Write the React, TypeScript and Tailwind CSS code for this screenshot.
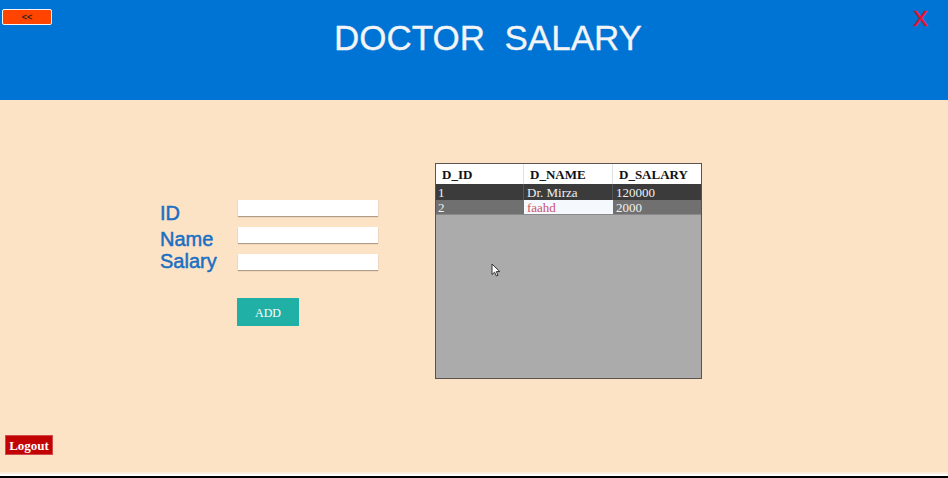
import React from "react";

const rows = [
  { id: "1", name: "Dr. Mirza", salary: "120000" },
  { id: "2", name: "faahd", salary: "2000" },
];

function Cursor() {
  return (
    <svg
      className="absolute left-[55px] top-[99px]"
      width="10"
      height="14"
      viewBox="0 0 10 14"
    >
      <path
        d="M1 1 L1 11.5 L3.6 9.2 L5.4 13 L7 12.3 L5.3 8.6 L8.8 8.6 Z"
        fill="#ffffff"
        stroke="#333333"
        strokeWidth="1"
        strokeLinejoin="round"
      />
    </svg>
  );
}

export default function App() {
  return (
    <div className="w-[948px] h-[478px] flex flex-col overflow-hidden bg-[#fde3c6] font-['Liberation_Sans',Arial,sans-serif]">
      {/* header */}
      <header className="h-[100px] shrink-0 bg-[#0074d5] flex items-start">
        <button className="ml-[2px] mt-[9px] w-[50px] h-[16px] rounded-[2px] border border-[#f4f4f4] bg-[#ff4400] text-[9px] font-bold leading-none text-[#3a2222] flex items-center justify-center">
          &lt;&lt;
        </button>
        <h1 className="ml-[282px] mt-[20px] text-[35px] leading-none text-[#f2f4f6] whitespace-pre [-webkit-text-stroke:0.3px_#f2f4f6]">
          DOCTOR  SALARY
        </h1>
        <span className="ml-auto mr-[20px] mt-[8px] text-[22px] leading-none text-[#e8102a] [-webkit-text-stroke:0.6px_#e8102a]">X</span>
      </header>

      {/* body */}
      <main className="flex-1 flex flex-col">
        <div className="flex items-start">
          <div className="ml-[160px] mt-[100px] flex">
            <div className="w-[78px] flex flex-col text-[20px] leading-none text-[#1b6fc3] [-webkit-text-stroke:0.5px_#1b6fc3]">
              <span className="mt-[3px]">ID</span>
              <span className="mt-[6px]">Name</span>
              <span className="mt-[2px]">Salary</span>
            </div>
            <div className="w-[140px] flex flex-col">
              <input className="h-[16px] bg-white shadow-[0_1px_1px_rgba(0,0,0,0.3)] outline-none" />
              <input className="mt-[11px] h-[16px] bg-white shadow-[0_1px_1px_rgba(0,0,0,0.3)] outline-none" />
              <input className="mt-[11px] h-[16px] bg-white shadow-[0_1px_1px_rgba(0,0,0,0.3)] outline-none" />
              <button className="mt-[28px] -ml-px w-[62px] h-[28px] pt-[2px] bg-[#21b0a5] text-white text-[12px] font-['Liberation_Serif',serif]">
                ADD
              </button>
            </div>
          </div>

          <div className="relative ml-[57px] mt-[63px] w-[267px] h-[216px] border border-[#595450] bg-[#ababab] font-['Liberation_Serif',serif] text-[13px] leading-none">
            <div className="grid grid-cols-[88px_89px_88px] h-[20px] bg-white font-bold text-[#111]">
              <div className="pl-[6px] pt-px flex items-center border-r border-[#e2e2e2]">D_ID</div>
              <div className="pl-[6px] pt-px flex items-center border-r border-[#e2e2e2]">D_NAME</div>
              <div className="pl-[6px] pt-px flex items-center">D_SALARY</div>
            </div>
            <div className="grid grid-cols-[88px_89px_88px] h-[16px] bg-[#3b3b3b] text-[#f0f0f0]">
              <div className="pl-[2px] flex items-center border-r border-[#555]">{rows[0].id}</div>
              <div className="pl-[3px] flex items-center border-r border-[#555]">{rows[0].name}</div>
              <div className="pl-[3px] flex items-center">{rows[0].salary}</div>
            </div>
            <div className="grid grid-cols-[88px_89px_88px] h-[15px] bg-[#707070] text-[#f0f0f0] border-b border-[#8a8a8a]">
              <div className="pl-[2px] flex items-center">{rows[1].id}</div>
              <div className="pl-[3px] flex items-center bg-[#f5f9fd] text-[#c9536c]">{rows[1].name}</div>
              <div className="pl-[3px] flex items-center">{rows[1].salary}</div>
            </div>
            <Cursor />
          </div>
        </div>

        <button className="mt-auto mb-[17px] ml-[5px] w-[48px] h-[20px] bg-[#c20303] border border-[#d24a4a] text-white font-bold text-[13px] leading-none font-['Liberation_Serif',serif] flex items-center justify-center">
          Logout
        </button>
      </main>

      <div className="h-[2px] shrink-0 bg-[#fdeedd]" />
      <div className="h-[2px] shrink-0 bg-white" />
      <div className="h-[2px] shrink-0 bg-black" />
    </div>
  );
}
